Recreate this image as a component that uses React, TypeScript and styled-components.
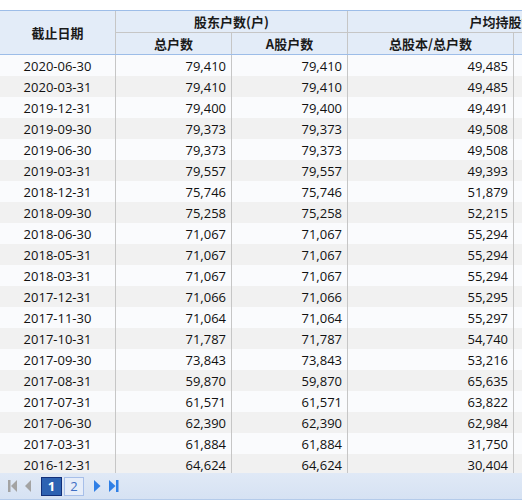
import React from "react";
import styled, { createGlobalStyle } from "styled-components";

const Global = createGlobalStyle`
  html, body { margin: 0; padding: 0; background: #fff; }
  body { font-family: "Open Sans", "Noto Sans CJK SC", sans-serif; }
`;

const COLS = "116px 116px 116px 166px 166px";

const Page = styled.div`
  width: 522px;
  height: 504px;
  overflow: hidden;
  padding-top: 10px;
  box-sizing: border-box;
  background: #fff;
`;

const Grid = styled.div`
  width: 680px;
`;

const Header = styled.div`
  display: grid;
  grid-template-columns: ${COLS};
  grid-template-rows: 22px 21px;
  background: #e3ecf8;
  border-top: 1px solid #9dbde8;
  border-bottom: 1px solid #9dbde8;
  font-family: "Noto Sans CJK SC", sans-serif;
  font-weight: 700;
  font-size: 13px;
  color: #1a1a1a;
`;

const HCell = styled.div<{ $col: string; $row: string; $line?: boolean }>`
  grid-column: ${(p) => p.$col};
  grid-row: ${(p) => p.$row};
  display: flex;
  align-items: center;
  justify-content: center;
  border-right: 1px solid #c6c6c6;
  border-bottom: ${(p) => (p.$line ? "1px solid #c6c6c6" : "none")};
  white-space: nowrap;
  overflow: hidden;
  line-height: 1;
`;

const Body = styled.div`
  height: 418px;
  overflow: hidden;
`;

const Row = styled.div<{ $alt: boolean }>`
  display: grid;
  grid-template-columns: ${COLS};
  height: 21px;
  background: ${(p) => (p.$alt ? "#f1f1f1" : "#fafbfd")};
  font-size: 13px;
  color: #111;
`;

const Cell = styled.div<{ $center?: boolean }>`
  display: flex;
  align-items: center;
  justify-content: ${(p) => (p.$center ? "center" : "flex-end")};
  padding: 0 5px;
  border-right: 1px solid #c6c6c6;
  white-space: nowrap;
  overflow: hidden;
`;

const Footer = styled.div`
  height: 26px;
  display: flex;
  align-items: center;
  padding-left: 8px;
  background: linear-gradient(#e0e9f6, #d6e2f3);
  border-bottom: 1px solid #b4cbea;
`;

const Nav = styled.span<{ $ml: number }>`
  display: inline-flex;
  margin-left: ${(p) => p.$ml}px;
`;

const PageBtn = styled.span<{ $active?: boolean; $ml: number }>`
  box-sizing: border-box;
  width: ${(p) => (p.$active ? 21 : 20)}px;
  height: 19px;
  margin-left: ${(p) => p.$ml}px;
  display: inline-flex;
  align-items: center;
  justify-content: center;
  font-size: 13px;
  font-weight: ${(p) => (p.$active ? 700 : 400)};
  color: ${(p) => (p.$active ? "#fff" : "#3f6fc4")};
  background: ${(p) => (p.$active ? "#2d62b2" : "#e6edf9")};
  border: 1px solid ${(p) => (p.$active ? "#13307a" : "#a7bfe9")};
`;

const data: [string, string, string, string][] = [
  ["2020-06-30", "79,410", "79,410", "49,485"],
  ["2020-03-31", "79,410", "79,410", "49,485"],
  ["2019-12-31", "79,400", "79,400", "49,491"],
  ["2019-09-30", "79,373", "79,373", "49,508"],
  ["2019-06-30", "79,373", "79,373", "49,508"],
  ["2019-03-31", "79,557", "79,557", "49,393"],
  ["2018-12-31", "75,746", "75,746", "51,879"],
  ["2018-09-30", "75,258", "75,258", "52,215"],
  ["2018-06-30", "71,067", "71,067", "55,294"],
  ["2018-05-31", "71,067", "71,067", "55,294"],
  ["2018-03-31", "71,067", "71,067", "55,294"],
  ["2017-12-31", "71,066", "71,066", "55,295"],
  ["2017-11-30", "71,064", "71,064", "55,297"],
  ["2017-10-31", "71,787", "71,787", "54,740"],
  ["2017-09-30", "73,843", "73,843", "53,216"],
  ["2017-08-31", "59,870", "59,870", "65,635"],
  ["2017-07-31", "61,571", "61,571", "63,822"],
  ["2017-06-30", "62,390", "62,390", "62,984"],
  ["2017-03-31", "61,884", "61,884", "31,750"],
  ["2016-12-31", "64,624", "64,624", "30,404"],
];

export default function App() {
  return (
    <Page>
      <Global />
      <Grid>
        <Header>
          <HCell $col="1" $row="1 / span 2">截止日期</HCell>
          <HCell $col="2 / span 2" $row="1" $line>股东户数(户)</HCell>
          <HCell $col="4 / span 2" $row="1" $line>户均持股数(股)</HCell>
          <HCell $col="2" $row="2">总户数</HCell>
          <HCell $col="3" $row="2">A股户数</HCell>
          <HCell $col="4" $row="2">总股本/总户数</HCell>
          <HCell $col="5" $row="2">流通A股/A股户数</HCell>
        </Header>
        <Body>
          {data.map((r, i) => (
            <Row key={r[0]} $alt={i % 2 === 1}>
              <Cell $center>{r[0]}</Cell>
              <Cell>{r[1]}</Cell>
              <Cell>{r[2]}</Cell>
              <Cell>{r[3]}</Cell>
              <Cell>{r[3]}</Cell>
            </Row>
          ))}
        </Body>
      </Grid>
      <Footer>
        <Nav $ml={0}>
          <svg width="10" height="12" viewBox="0 0 10 12">
            <rect x="0" y="0" width="2.5" height="12" fill="#a3a3a3" />
            <polygon points="9,0 9,12 3,6" fill="#a3a3a3" />
          </svg>
        </Nav>
        <Nav $ml={7}>
          <svg width="7" height="12" viewBox="0 0 7 12">
            <polygon points="6,0 6,12 0,6" fill="#a3a3a3" />
          </svg>
        </Nav>
        <PageBtn $active $ml={9}>1</PageBtn>
        <PageBtn $ml={2}>2</PageBtn>
        <Nav $ml={10}>
          <svg width="7" height="12" viewBox="0 0 7 12">
            <polygon points="0,0 0,12 6.5,6" fill="#2f7fe6" />
          </svg>
        </Nav>
        <Nav $ml={8}>
          <svg width="10" height="12" viewBox="0 0 10 12">
            <polygon points="0,0 0,12 6.5,6" fill="#2f7fe6" />
            <rect x="7" y="0" width="2.5" height="12" fill="#2f7fe6" />
          </svg>
        </Nav>
      </Footer>
    </Page>
  );
}
